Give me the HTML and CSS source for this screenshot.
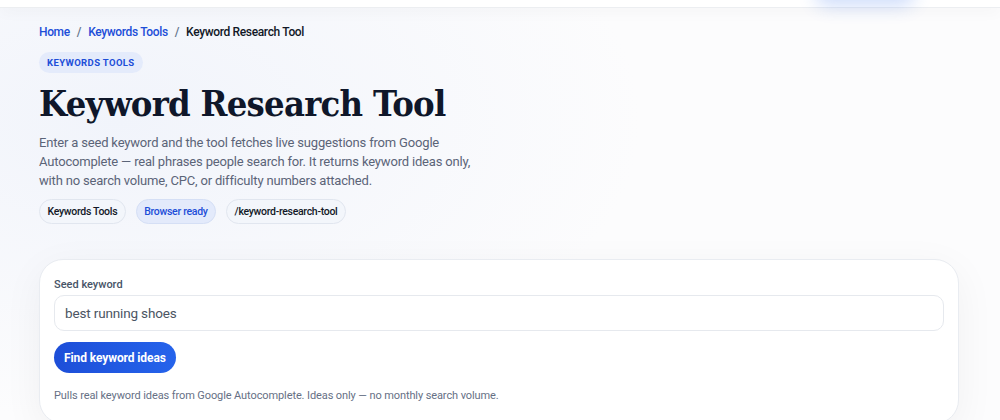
FILE: index.html
```html
<!DOCTYPE html>
<html lang="en">
<head>
<meta charset="utf-8">
<title>Keyword Research Tool</title>
<link rel="stylesheet" href="styles.css">
</head>
<body>
<header class="topbar">
  <div class="topbar-inner">
    <span class="topbar-cta"></span>
  </div>
</header>
<main class="page">
  <nav class="crumbs">
    <a href="#" class="crumb-link">Home</a>
    <span class="crumb-sep">/</span>
    <a href="#" class="crumb-link">Keywords Tools</a>
    <span class="crumb-sep">/</span>
    <span class="crumb-current">Keyword Research Tool</span>
  </nav>
  <span class="eyebrow">KEYWORDS TOOLS</span>
  <h1 class="title">Keyword Research Tool</h1>
  <p class="lead">Enter a seed keyword and the tool fetches live suggestions from Google Autocomplete — real phrases people search for. It returns keyword ideas only, with no search volume, CPC, or difficulty numbers attached.</p>
  <div class="tags">
    <span class="tag">Keywords Tools</span>
    <span class="tag tag-blue">Browser ready</span>
    <span class="tag">/keyword-research-tool</span>
  </div>
  <section class="card">
    <label class="field-label" for="seed">Seed keyword</label>
    <input id="seed" class="field-input" type="text" value="best running shoes">
    <div class="actions">
      <button class="btn" type="button">Find keyword ideas</button>
    </div>
    <p class="note">Pulls real keyword ideas from Google Autocomplete. Ideas only — no monthly search volume.</p>
  </section>
</main>
</body>
</html>
```

FILE: styles.css
```css
* { box-sizing: border-box; }
html, body { margin: 0; padding: 0; }
body {
  font-family: Roboto, "Noto Sans", "Liberation Sans", sans-serif;
  color: #0f172a;
  height: 420px;
  overflow: hidden;
  background:
    radial-gradient(ellipse 520px 300px at 120px 120px, #f1f4fb 0%, rgba(241,244,251,0) 100%),
    #fcfcfd;
}
.topbar {
  height: 8px;
  background: #ffffff;
  border-bottom: 1px solid #eceef1;
  box-shadow: 0 4px 14px rgba(15, 23, 42, 0.04);
  position: relative;
  z-index: 2;
}
.topbar-inner {
  display: flex;
  justify-content: flex-end;
  padding-right: 85px;
  height: 8px;
}
.topbar-cta {
  width: 100px;
  height: 28px;
  margin-top: -30px;
  border-radius: 999px;
  background: #ffffff;
  box-shadow: 0 8px 18px rgba(37, 99, 235, 0.22);
}
.page {
  padding: 15px 40px 0 39px;
}
.crumbs {
  display: flex;
  align-items: center;
  gap: 6px;
  font-size: 12px;
  font-weight: 500;
  line-height: 18px;
  letter-spacing: -0.35px;
}
.crumb-link { color: #1d4ed8; text-decoration: none; }
.crumb-sep { color: #64748b; padding: 0 1px; }
.crumb-current { color: #111827; }
.eyebrow {
  display: inline-block;
  margin-top: 11px;
  padding: 0 8px;
  height: 21px;
  line-height: 21px;
  border-radius: 999px;
  background: #e4ebfb;
  color: #1d4ed8;
  font-size: 9.5px;
  font-weight: 700;
  letter-spacing: 0.04em;
}
.title {
  margin: 8px 0 0;
  font-family: "DejaVu Serif", "Liberation Serif", serif;
  font-stretch: condensed;
  font-weight: 700;
  font-size: 36px;
  line-height: 44px;
  color: #0f172a;
  letter-spacing: -0.02em;
}
.lead {
  margin: 8px 0 0;
  max-width: 450px;
  font-size: 13px;
  line-height: 19px;
  letter-spacing: -0.18px;
  color: #5b6478;
}
.tags {
  display: flex;
  gap: 10px;
  margin-top: 9px;
}
.tag {
  display: inline-block;
  height: 25px;
  line-height: 23px;
  padding: 0 7.5px;
  border-radius: 999px;
  border: 1px solid #e1e6ef;
  background: #f3f6fb;
  font-size: 10.5px;
  font-weight: 500;
  letter-spacing: -0.3px;
  color: #111827;
}
.tag-blue {
  background: #e3eafb;
  border-color: #d5dff5;
  color: #1d4ed8;
}
.card {
  margin-top: 35px;
  margin-right: 1px;
  padding: 18px 14px 20px;
  background: #ffffff;
  border: 1px solid #e9ecf1;
  border-radius: 24px;
  box-shadow: 0 10px 40px rgba(15, 23, 42, 0.05);
  display: flex;
  flex-direction: column;
}
.field-label {
  font-size: 11px;
  font-weight: 500;
  color: #475467;
  line-height: 14px;
}
.field-input {
  margin-top: 3px;
  height: 36px;
  width: 100%;
  border: 1px solid #e6e9ee;
  border-radius: 10px;
  padding: 0 10px;
  font-family: inherit;
  font-size: 13.5px;
  letter-spacing: -0.15px;
  color: #4b5563;
  background: #ffffff;
  outline: none;
}
.actions {
  margin-top: 11px;
  display: flex;
}
.btn {
  height: 31px;
  padding: 0 10px;
  border: none;
  border-radius: 999px;
  background: linear-gradient(90deg, #1d4ed8, #2563eb);
  color: #ffffff;
  font-family: inherit;
  font-size: 12px;
  font-weight: 700;
  letter-spacing: -0.1px;
  cursor: pointer;
}
.note {
  margin: 15px 0 0;
  font-size: 11px;
  line-height: 15px;
  letter-spacing: -0.1px;
  color: #667085;
}
```
